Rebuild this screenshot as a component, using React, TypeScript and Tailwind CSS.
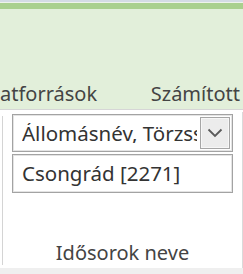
import React from 'react';

const font = { fontFamily: '"Noto Sans", "Open Sans", sans-serif' };

const ChevronDown: React.FC = () => (
  <svg width="16" height="10" viewBox="0 0 16 10" fill="none">
    <path d="M1.5 1.5 L8 8 L14.5 1.5" stroke="#5a5a5a" strokeWidth="1.8" />
  </svg>
);

export default function App() {
  return (
    <div className="w-[243px] h-[274px] overflow-hidden bg-white text-[#444]" style={font}>
      <div className="h-[2px] bg-[#d3dbe4]" />
      <div className="h-px bg-[#eef3ea]" />
      <div className="h-[6px] bg-[#a9d08e]" />
      <div className="h-[100px] bg-[#e2efda] flex items-end justify-between pb-[5px] whitespace-nowrap text-[20px] leading-none">
        <span>atforrások</span>
        <span className="pr-[3px]">Számított</span>
      </div>
      <div className="h-px bg-[#d6d6d6]" />
      <div className="flex h-[158px]">
        <div className="w-px ml-[2px] mt-[6px] mb-[3px] bg-[#d4d4d4]" />
        <div className="flex-1 min-w-0 flex flex-col pl-[9px] pr-[9px] pt-[4px]">
          <div className="h-[38px] flex items-center border border-[#a3a3a3] shadow-[inset_0_0_0_1px_#e4e4e4] pl-[9px] pr-[2px]">
            <span className="flex-1 min-w-0 mr-[3px] overflow-hidden whitespace-nowrap text-[20.5px] text-[#333] leading-none">Állomásnév, Törzsszám</span>
            <div className="shrink-0 w-[30px] h-[32px] flex items-center justify-center border border-[#a6a6a6] shadow-[inset_0_0_0_1px_#f7f7f7] bg-[#ececec]">
              <ChevronDown />
            </div>
          </div>
          <div className="mt-[2px] h-[39px] flex items-center border border-[#a3a3a3] shadow-[inset_0_0_0_1px_#e4e4e4] pl-[9px]">
            <span className="whitespace-nowrap text-[20.5px] text-[#333] leading-none">Csongrád [2271]</span>
          </div>
          <div className="flex-1 flex items-end justify-center pb-[5px]">
            <span className="text-[20px] leading-none whitespace-nowrap">Idősorok neve</span>
          </div>
        </div>
        <div className="w-px mt-[2px] bg-[#dadada]" />
      </div>
      <div className="h-[6px] bg-[#efefef]" />
    </div>
  );
}
